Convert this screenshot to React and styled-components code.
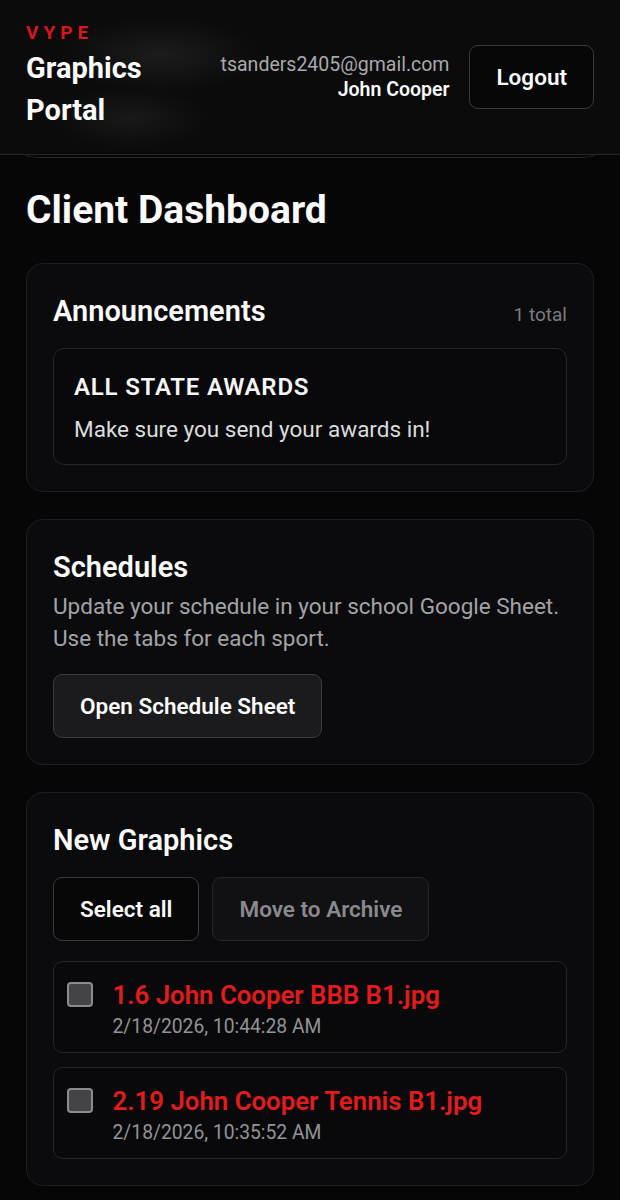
import React, { useState } from "react";
import styled, { createGlobalStyle } from "styled-components";

const GlobalStyle = createGlobalStyle`
  * { box-sizing: border-box; }
  body {
    margin: 0;
    background: #060607;
    font-family: Roboto, "Liberation Sans", Arial, sans-serif;
    color: #f5f5f5;
  }
`;

const Page = styled.div`
  min-height: 1200px;
  background: #060607;
`;

const Header = styled.header`
  height: 155px;
  display: flex;
  align-items: center;
  justify-content: space-between;
  padding: 0 26px;
  border-bottom: 1px solid #26262a;
  background:
    radial-gradient(ellipse 140px 55px at 160px 55px, rgba(255, 255, 255, 0.07), transparent 70%),
    radial-gradient(ellipse 110px 45px at 130px 118px, rgba(255, 255, 255, 0.06), transparent 70%),
    #0b0b0c;
`;

const Brand = styled.div`
  display: flex;
  flex-direction: column;
  gap: 4px;
`;

const Tag = styled.span`
  font-size: 19px;
  line-height: 20px;
  font-weight: 700;
  letter-spacing: 5px;
  color: #d9161d;
`;

const BrandTitle = styled.div`
  font-size: 29px;
  line-height: 42px;
  font-weight: 700;
  width: 130px;
  color: #fafafa;
`;

const UserArea = styled.div`
  display: flex;
  align-items: center;
  gap: 20px;
`;

const UserInfo = styled.div`
  display: flex;
  flex-direction: column;
  align-items: flex-end;
`;

const Email = styled.span`
  font-size: 19.5px;
  line-height: 25px;
  color: #a9a9ad;
`;

const UserName = styled.span`
  font-size: 19.5px;
  line-height: 25px;
  font-weight: 600;
  color: #fafafa;
`;

const Button = styled.button`
  height: 64px;
  padding: 0 26px;
  border-radius: 9px;
  font-family: inherit;
  font-size: 22.5px;
  font-weight: 600;
  cursor: pointer;
  border: 1px solid ${(p) => (p.$muted ? "#27272a" : "#3b3b3f")};
  background: ${(p) => (p.$filled ? "#1b1b1d" : p.$muted ? "#111113" : "#070708")};
  color: ${(p) => (p.$muted ? "#8a8a8e" : "#fafafa")};
`;

const PeekEdge = styled.div`
  height: 3px;
  margin: 0 26px;
  border: 1px solid #2a2a2e;
  border-top: none;
  border-radius: 0 0 16px 16px / 0 0 3px 3px;
`;

const Main = styled.main`
  padding: 29px 26px 0;
  display: flex;
  flex-direction: column;
`;

const PageTitle = styled.h1`
  margin: 0 0 29px;
  font-size: 39px;
  line-height: 47px;
  font-weight: 700;
  color: #fafafa;
`;

const Cards = styled.div`
  display: flex;
  flex-direction: column;
  gap: 27px;
`;

const Card = styled.section`
  border: 1px solid #1f1f23;
  border-radius: 17px;
  background: #0b0b0d;
  padding: 29px 26px 26px;
`;

const CardHead = styled.div`
  display: flex;
  align-items: baseline;
  justify-content: space-between;
  margin-bottom: ${(p) => p.$gap || 0}px;
`;

const CardTitle = styled.h2`
  margin: 0;
  font-size: 29px;
  line-height: 36px;
  font-weight: 600;
  color: #fafafa;
`;

const Count = styled.span`
  font-size: 19px;
  color: #7c7c80;
`;

const Notice = styled.div`
  border: 1px solid #26262a;
  border-radius: 11px;
  background: #09090b;
  padding: 23px 20px 19px;
`;

const NoticeTitle = styled.div`
  font-size: 24px;
  line-height: 30px;
  font-weight: 600;
  letter-spacing: 0.8px;
  color: #f5f5f5;
  margin-bottom: 12px;
`;

const NoticeText = styled.div`
  font-size: 22.5px;
  line-height: 31px;
  color: #dcdcde;
`;

const Description = styled.p`
  margin: 6px 0 20px;
  font-size: 22.5px;
  line-height: 31.7px;
  color: #a3a3a7;
`;

const Actions = styled.div`
  display: flex;
  gap: 13px;
  margin-bottom: 20px;
`;

const FileList = styled.div`
  display: flex;
  flex-direction: column;
  gap: 14px;
`;

const FileRow = styled.label`
  display: flex;
  align-items: flex-start;
  gap: 19.5px;
  padding: 18px 13px 14px;
  border: 1px solid #25252a;
  border-radius: 10px;
  background: #09090b;
  cursor: pointer;
`;

const Check = styled.span`
  flex: none;
  width: 26px;
  height: 25px;
  margin-top: 2px;
  border-radius: 4px;
  border: 2px solid ${(p) => (p.$on ? "#e11d1d" : "#8c8c90")};
  background: ${(p) => (p.$on ? "#e11d1d" : "#444446")};
`;

const FileText = styled.div`
  display: flex;
  flex-direction: column;
  gap: 4px;
`;

const FileName = styled.span`
  font-size: 25.8px;
  line-height: 31px;
  font-weight: 600;
  color: #e31b1b;
`;

const FileDate = styled.span`
  font-size: 19.3px;
  line-height: 23px;
  color: #939397;
`;

const files = [
  { id: 1, name: "1.6 John Cooper BBB B1.jpg", date: "2/18/2026, 10:44:28 AM" },
  { id: 2, name: "2.19 John Cooper Tennis B1.jpg", date: "2/18/2026, 10:35:52 AM" },
];

export default function App() {
  const [picked, setPicked] = useState([]);

  const toggle = (id) =>
    setPicked((cur) => (cur.includes(id) ? cur.filter((x) => x !== id) : [...cur, id]));

  return (
    <>
      <GlobalStyle />
      <Page>
        <Header>
          <Brand>
            <Tag>VYPE</Tag>
            <BrandTitle>Graphics Portal</BrandTitle>
          </Brand>
          <UserArea>
            <UserInfo>
              <Email>tsanders2405@gmail.com</Email>
              <UserName>John Cooper</UserName>
            </UserInfo>
            <Button>Logout</Button>
          </UserArea>
        </Header>
        <PeekEdge />

        <Main>
          <PageTitle>Client Dashboard</PageTitle>
          <Cards>
            <Card>
              <CardHead $gap={19}>
                <CardTitle>Announcements</CardTitle>
                <Count>1 total</Count>
              </CardHead>
              <Notice>
                <NoticeTitle>ALL STATE AWARDS</NoticeTitle>
                <NoticeText>Make sure you send your awards in!</NoticeText>
              </Notice>
            </Card>

            <Card>
              <CardTitle>Schedules</CardTitle>
              <Description>
                Update your schedule in your school Google Sheet. Use the tabs for each sport.
              </Description>
              <Button $filled>Open Schedule Sheet</Button>
            </Card>

            <Card>
              <CardHead $gap={19}>
                <CardTitle>New Graphics</CardTitle>
              </CardHead>
              <Actions>
                <Button onClick={() => setPicked(files.map((f) => f.id))}>Select all</Button>
                <Button $muted disabled={!picked.length}>
                  Move to Archive
                </Button>
              </Actions>
              <FileList>
                {files.map((f) => (
                  <FileRow key={f.id} onClick={() => toggle(f.id)}>
                    <Check $on={picked.includes(f.id)} />
                    <FileText>
                      <FileName>{f.name}</FileName>
                      <FileDate>{f.date}</FileDate>
                    </FileText>
                  </FileRow>
                ))}
              </FileList>
            </Card>
          </Cards>
        </Main>
      </Page>
    </>
  );
}
